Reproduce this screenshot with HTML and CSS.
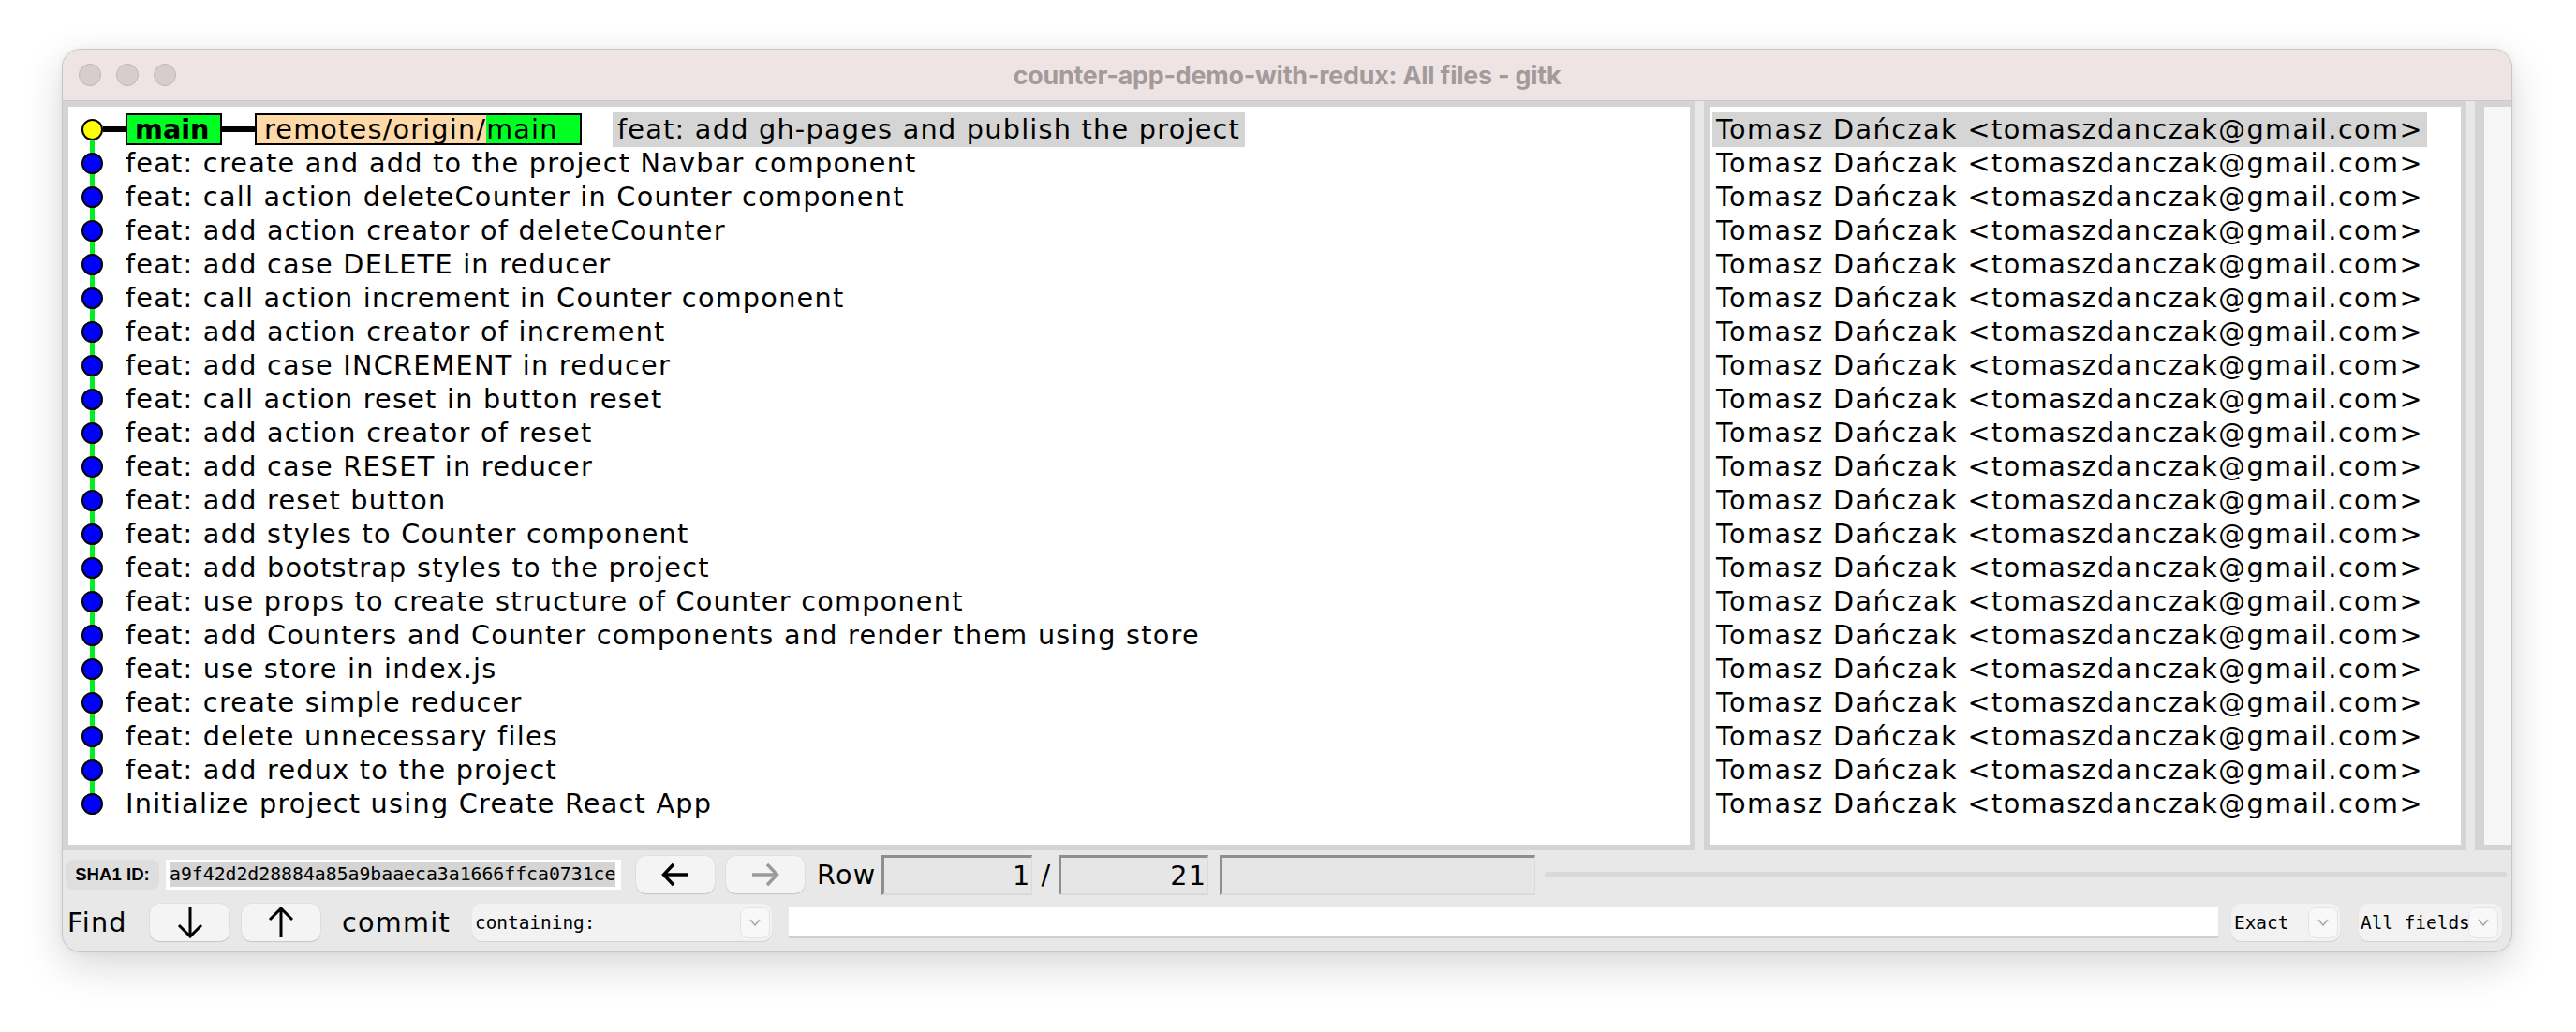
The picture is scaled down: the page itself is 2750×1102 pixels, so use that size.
FILE: index.html
```html
<!DOCTYPE html>
<html>
<head>
<meta charset="utf-8">
<link rel="stylesheet" href="styles.css">
</head>
<body>
<div class="window">
  <div class="titlebar">
    <div class="lights"><span class="light"></span><span class="light"></span><span class="light"></span></div>
    <div class="title">counter-app-demo-with-redux: All files - gitk</div>
    <div></div>
  </div>
  <div class="panes">
    <div class="pane commits">
      <div class="row first">
        <div class="graph"><span class="node head"></span><span class="link"></span></div>
        <span class="tag local">main</span><span class="tag-link"></span>
        <span class="tag remote"><span class="rp">remotes/origin/</span><span class="rb">main</span></span>
        <span class="headline sel">feat: add gh-pages and publish the project</span>
      </div>
      <div class="row"><div class="graph"><span class="node"></span></div><span class="headline">feat: create and add to the project Navbar component</span></div>
      <div class="row"><div class="graph"><span class="node"></span></div><span class="headline">feat: call action deleteCounter in Counter component</span></div>
      <div class="row"><div class="graph"><span class="node"></span></div><span class="headline">feat: add action creator of deleteCounter</span></div>
      <div class="row"><div class="graph"><span class="node"></span></div><span class="headline">feat: add case DELETE in reducer</span></div>
      <div class="row"><div class="graph"><span class="node"></span></div><span class="headline">feat: call action increment in Counter component</span></div>
      <div class="row"><div class="graph"><span class="node"></span></div><span class="headline">feat: add action creator of increment</span></div>
      <div class="row"><div class="graph"><span class="node"></span></div><span class="headline">feat: add case INCREMENT in reducer</span></div>
      <div class="row"><div class="graph"><span class="node"></span></div><span class="headline">feat: call action reset in button reset</span></div>
      <div class="row"><div class="graph"><span class="node"></span></div><span class="headline">feat: add action creator of reset</span></div>
      <div class="row"><div class="graph"><span class="node"></span></div><span class="headline">feat: add case RESET in reducer</span></div>
      <div class="row"><div class="graph"><span class="node"></span></div><span class="headline">feat: add reset button</span></div>
      <div class="row"><div class="graph"><span class="node"></span></div><span class="headline">feat: add styles to Counter component</span></div>
      <div class="row"><div class="graph"><span class="node"></span></div><span class="headline">feat: add bootstrap styles to the project</span></div>
      <div class="row"><div class="graph"><span class="node"></span></div><span class="headline">feat: use props to create structure of Counter component</span></div>
      <div class="row"><div class="graph"><span class="node"></span></div><span class="headline">feat: add Counters and Counter components and render them using store</span></div>
      <div class="row"><div class="graph"><span class="node"></span></div><span class="headline">feat: use store in index.js</span></div>
      <div class="row"><div class="graph"><span class="node"></span></div><span class="headline">feat: create simple reducer</span></div>
      <div class="row"><div class="graph"><span class="node"></span></div><span class="headline">feat: delete unnecessary files</span></div>
      <div class="row"><div class="graph"><span class="node"></span></div><span class="headline">feat: add redux to the project</span></div>
      <div class="row last"><div class="graph"><span class="node"></span></div><span class="headline">Initialize project using Create React App</span></div>
    </div>
    <div class="sash"></div>
    <div class="pane authors">
      <div class="arow"><span class="author sel">Tomasz Dańczak &lt;tomaszdanczak@gmail.com&gt;</span></div>
      <div class="arow"><span class="author">Tomasz Dańczak &lt;tomaszdanczak@gmail.com&gt;</span></div>
      <div class="arow"><span class="author">Tomasz Dańczak &lt;tomaszdanczak@gmail.com&gt;</span></div>
      <div class="arow"><span class="author">Tomasz Dańczak &lt;tomaszdanczak@gmail.com&gt;</span></div>
      <div class="arow"><span class="author">Tomasz Dańczak &lt;tomaszdanczak@gmail.com&gt;</span></div>
      <div class="arow"><span class="author">Tomasz Dańczak &lt;tomaszdanczak@gmail.com&gt;</span></div>
      <div class="arow"><span class="author">Tomasz Dańczak &lt;tomaszdanczak@gmail.com&gt;</span></div>
      <div class="arow"><span class="author">Tomasz Dańczak &lt;tomaszdanczak@gmail.com&gt;</span></div>
      <div class="arow"><span class="author">Tomasz Dańczak &lt;tomaszdanczak@gmail.com&gt;</span></div>
      <div class="arow"><span class="author">Tomasz Dańczak &lt;tomaszdanczak@gmail.com&gt;</span></div>
      <div class="arow"><span class="author">Tomasz Dańczak &lt;tomaszdanczak@gmail.com&gt;</span></div>
      <div class="arow"><span class="author">Tomasz Dańczak &lt;tomaszdanczak@gmail.com&gt;</span></div>
      <div class="arow"><span class="author">Tomasz Dańczak &lt;tomaszdanczak@gmail.com&gt;</span></div>
      <div class="arow"><span class="author">Tomasz Dańczak &lt;tomaszdanczak@gmail.com&gt;</span></div>
      <div class="arow"><span class="author">Tomasz Dańczak &lt;tomaszdanczak@gmail.com&gt;</span></div>
      <div class="arow"><span class="author">Tomasz Dańczak &lt;tomaszdanczak@gmail.com&gt;</span></div>
      <div class="arow"><span class="author">Tomasz Dańczak &lt;tomaszdanczak@gmail.com&gt;</span></div>
      <div class="arow"><span class="author">Tomasz Dańczak &lt;tomaszdanczak@gmail.com&gt;</span></div>
      <div class="arow"><span class="author">Tomasz Dańczak &lt;tomaszdanczak@gmail.com&gt;</span></div>
      <div class="arow"><span class="author">Tomasz Dańczak &lt;tomaszdanczak@gmail.com&gt;</span></div>
      <div class="arow"><span class="author">Tomasz Dańczak &lt;tomaszdanczak@gmail.com&gt;</span></div>
    </div>
    <div class="sash"></div>
    <div class="pane dates"></div>
  </div>
  <div class="bottom">
    <div class="bar sha-bar">
      <div class="sha-label">SHA1 ID:</div>
      <div class="sha-entry"><span class="sha-sel">a9f42d2d28884a85a9baaeca3a1666ffca0731ce</span></div>
      <div class="btn back"><svg width="32" height="28" viewBox="0 0 32 28"><path d="M30 14H4M14 3L3.5 14L14 25" fill="none" stroke="#000" stroke-width="3.4"/></svg></div>
      <div class="btn fwd"><svg width="32" height="28" viewBox="0 0 32 28"><path d="M2 14H28M18 3L28.5 14L18 25" fill="none" stroke="#9a9a9a" stroke-width="3.4"/></svg></div>
      <div class="label row-label">Row</div>
      <div class="sunken num n1">1</div>
      <div class="label slash">/</div>
      <div class="sunken num n2">21</div>
      <div class="sunken n3"></div>
      <div class="progress"></div>
    </div>
    <div class="bar find-bar">
      <div class="label find-label">Find</div>
      <div class="btn down"><svg width="32" height="34" viewBox="0 0 32 34"><path d="M16 1V32M4 20L16 32L28 20" fill="none" stroke="#000" stroke-width="3"/></svg></div>
      <div class="btn up"><svg width="32" height="34" viewBox="0 0 32 34"><path d="M16 33V2M4 14L16 2L28 14" fill="none" stroke="#000" stroke-width="3"/></svg></div>
      <div class="label commit-label">commit</div>
      <div class="combo c-contain"><span class="ctext">containing:</span><span class="drop"><svg width="12" height="8" viewBox="0 0 12 8"><path d="M1 1L6 7L11 1" fill="none" stroke="#a8a8a8" stroke-width="1.6"/></svg></span></div>
      <div class="find-entry"></div>
      <div class="combo c-exact"><span class="ctext">Exact</span><span class="drop"><svg width="12" height="8" viewBox="0 0 12 8"><path d="M1 1L6 7L11 1" fill="none" stroke="#a8a8a8" stroke-width="1.6"/></svg></span></div>
      <div class="combo c-fields"><span class="ctext">All fields</span><span class="drop"><svg width="12" height="8" viewBox="0 0 12 8"><path d="M1 1L6 7L11 1" fill="none" stroke="#a8a8a8" stroke-width="1.6"/></svg></span></div>
    </div>
  </div>
</div>
</body>
</html>
```
FILE: styles.css
```css
html, body { margin: 0; }
body {
  width: 2750px;
  height: 1102px;
  overflow: hidden;
  background: #ffffff;
  padding: 52px 0 0 66px;
  box-sizing: border-box;
  font-family: "DejaVu Sans", "Noto Sans", sans-serif;
  color: #000;
}
.window {
  width: 2616px;
  height: 965px;
  box-sizing: border-box;
  border: 1px solid #c6c6c6;
  border-radius: 20px;
  overflow: hidden;
  background: #e8e8e8;
  box-shadow: 0 14px 44px rgba(0,0,0,0.16), 0 0 6px rgba(0,0,0,0.06);
  display: flex;
  flex-direction: column;
}
.titlebar {
  height: 55px;
  flex: none;
  box-sizing: border-box;
  border-bottom: 1px solid #cfc7c7;
  background: #eee4e4;
  display: grid;
  grid-template-columns: 1fr auto 1fr;
  align-items: center;
}
.lights { display: flex; gap: 16px; padding-left: 17px; }
.light {
  width: 24px; height: 24px; box-sizing: border-box;
  border-radius: 50%;
  background: #d6cece;
  border: 1px solid #c0b7b7;
}
.title {
  font-family: Inter, "Liberation Sans", sans-serif;
  font-weight: 700;
  font-size: 26.8px;
  color: #a39a9a;
  letter-spacing: -0.2px;
}
.panes { height: 800px; flex: none; display: flex; }
.pane { box-sizing: border-box; border: 6px solid #d4d4d4; background: #fff; overflow: hidden; }
.commits { width: 1743px; flex: none; padding-top: 6px; }
.sash { width: 9px; flex: none; }
.authors { width: 814px; flex: none; padding: 6px 0 0 3px; }
.dates { flex: 1; border-width: 6px 0 6px 10px; background: #f6f6f6; }

.row, .arow {
  height: 36px;
  display: flex;
  align-items: center;
  white-space: nowrap;
  font-size: 28.7px;
  letter-spacing: 1.25px;
  line-height: 36px;
}
.arow { letter-spacing: 1.45px; }
.graph {
  width: 61px; height: 36px; flex: none;
  display: flex; align-items: center;
  background: linear-gradient(#00ee22, #00ee22) no-repeat 23px 0 / 5px 100%;
}
.row.first .graph { background-position: 23px 100%; background-size: 5px 50%; }
.row.last .graph { background-size: 5px 50%; }
.node {
  width: 23px; height: 23px; box-sizing: border-box;
  margin-left: 14px;
  border-radius: 50%;
  border: 2px solid #000;
  background: #0000ff;
  flex: none;
}
.node.head { background: #ffff00; }
.link { flex: 1; height: 6px; background: #000; }
.tag {
  height: 34px; box-sizing: border-box;
  border: 2px solid #000;
  display: flex; align-items: center;
  flex: none;
  line-height: 30px;
}
.local {
  width: 103px; padding-left: 8px;
  background: #00ff22;
  font-weight: 700; letter-spacing: 0;
}
.tag-link { width: 35px; height: 6px; background: #000; flex: none; }
.remote { width: 349px; background: #ffdaa8; letter-spacing: 1.2px; }
.rp { padding-left: 8px; }
.rb { flex: 1; align-self: stretch; background: #00ff22; }
.first .headline { margin-left: 33px; padding: 0 5px; line-height: 37px; }
.sel { background: #d5d5d5; }
.author { padding: 0 4px; line-height: 37px; }

.bottom { flex: 1; padding-top: 4px; box-sizing: border-box; }
.bar { height: 44px; display: flex; align-items: center; }
.find-bar { margin-top: 7px; }
.label { font-size: 28.7px; letter-spacing: 1.25px; white-space: nowrap; flex: none; }
.sha-label {
  margin-left: 3px; width: 100px; height: 32px; flex: none;
  border-radius: 8px; background: #dedede;
  font-family: "Liberation Sans", Arial, sans-serif;
  font-weight: 700; font-size: 18.6px;
  display: flex; align-items: center; justify-content: center;
}
.sha-entry {
  margin-left: 7px; width: 486px; height: 32px; flex: none;
  background: #fff; box-sizing: border-box; padding-left: 4px;
  display: flex; align-items: center;
  font-family: "DejaVu Sans Mono", "Liberation Mono", monospace;
  font-size: 19.8px;
}
.sha-sel { background: #d4d4d4; line-height: 26px; }
.btn {
  width: 84px; height: 40px; flex: none; box-sizing: border-box;
  border-radius: 10px;
  background: #f4f4f4;
  box-shadow: 0 1px 1px rgba(0,0,0,0.12), 0 0 0 0.5px rgba(0,0,0,0.06);
  display: flex; align-items: center; justify-content: center;
}
.btn svg { display: block; }
.back { margin-left: 16px; }
.fwd { margin-left: 12px; }
.row-label { margin-left: 13px; }
.sunken {
  height: 43px; flex: none; box-sizing: border-box;
  background: #e6e6e6;
  border-top: 3px solid #8e8e8e;
  border-left: 3px solid #8e8e8e;
  border-right: 1px solid #dadada;
  border-bottom: 2px solid #dadada;
}
.num {
  font-size: 28.7px; letter-spacing: 1.25px;
  display: flex; align-items: center; justify-content: flex-end;
  padding-right: 1px;
}
.n1 { margin-left: 6px; width: 161px; }
.slash { margin: 0 8px 0 9px; }
.n2 { width: 160px; }
.n3 { margin-left: 12px; width: 337px; }
.progress {
  margin: 0 5px 0 10px; flex: 1; height: 6px;
  border-radius: 3px; background: #d9d9d9;
}
.find-label { margin-left: 5px; width: 65px; }
.down { margin-left: 23px; width: 85px; }
.up { margin-left: 13px; }
.commit-label { margin-left: 23px; width: 116px; }
.combo {
  height: 40px; flex: none; box-sizing: border-box;
  border-radius: 10px;
  background: #f2f2f2;
  box-shadow: 0 1px 1px rgba(0,0,0,0.1);
  display: flex; align-items: center;
  font-family: "DejaVu Sans Mono", "Liberation Mono", monospace;
  font-size: 19.4px;
  white-space: nowrap;
}
.ctext { flex: none; padding-left: 3px; }
.drop {
  margin-left: auto; margin-right: 2px;
  width: 32px; height: 33px; box-sizing: border-box; flex: none;
  border-radius: 8px; border: 1px solid #e4e4e4; background: #f8f8f8;
  display: flex; align-items: center; justify-content: center;
}
.c-contain { margin-left: 23px; width: 320px; }
.find-entry {
  margin-left: 18px; width: 1526px; height: 34px; flex: none;
  box-sizing: border-box; background: #fff;
  border-bottom: 2px solid #d0d0d0;
}
.c-exact { margin-left: 14px; width: 116px; }
.c-fields { margin-left: 20px; width: 153px; }
.c-fields .ctext { padding-left: 2px; }
.c-fields .drop { margin-left: -2px; }
```
